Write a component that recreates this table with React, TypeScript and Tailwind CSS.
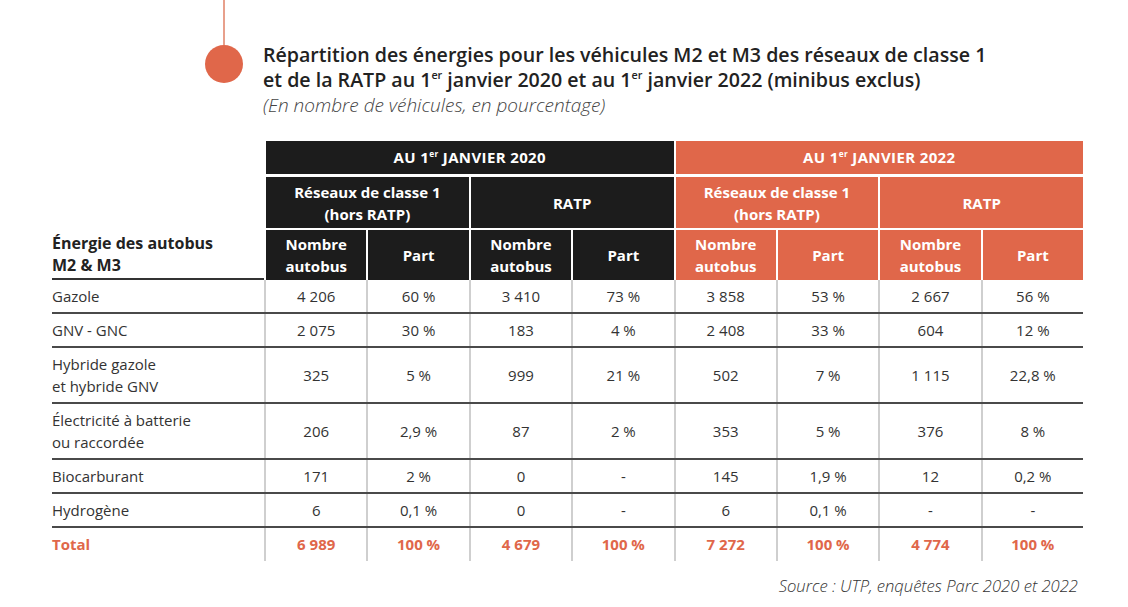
import React from "react"

const ORANGE = "bg-[#e0674a]"

type Row = { label: string[]; values: string[] }

const rows: Row[] = [
  { label: ["Gazole"], values: ["4 206", "60 %", "3 410", "73 %", "3 858", "53 %", "2 667", "56 %"] },
  { label: ["GNV - GNC"], values: ["2 075", "30 %", "183", "4 %", "2 408", "33 %", "604", "12 %"] },
  { label: ["Hybride gazole", "et hybride GNV"], values: ["325", "5 %", "999", "21 %", "502", "7 %", "1 115", "22,8 %"] },
  { label: ["Électricité à batterie", "ou raccordée"], values: ["206", "2,9 %", "87", "2 %", "353", "5 %", "376", "8 %"] },
  { label: ["Biocarburant"], values: ["171", "2 %", "0", "-", "145", "1,9 %", "12", "0,2 %"] },
  { label: ["Hydrogène"], values: ["6", "0,1 %", "0", "-", "6", "0,1 %", "-", "-"] },
]

const totals = ["6 989", "100 %", "4 679", "100 %", "7 272", "100 %", "4 774", "100 %"]

function Er() {
  return <sup className="text-[0.55em] -top-[0.75em] leading-none">er</sup>
}

export default function App() {
  const grid = "grid grid-cols-[212px_repeat(8,1fr)] gap-x-[2px]"

  return (
    <div
      className="w-[1128px] h-[607px] bg-white relative overflow-hidden text-[#2a2a2a]"
      style={{ fontFamily: '"Open Sans", "Liberation Sans", sans-serif' }}
    >
      {/* titre */}
      <div className="flex items-start pl-[205px]">
        <div className="flex flex-col items-center w-[38px]">
          <div className="w-[2px] h-[45px] bg-[#e8a08c]" />
          <div className={`w-[38px] h-[38px] rounded-full ${ORANGE}`} />
        </div>
        <div className="pl-[20px] pt-[42px]">
          <h1 className="text-[19.6px] leading-[25px] font-semibold text-[#222] whitespace-nowrap">
            Répartition des énergies pour les véhicules M2 et M3 des réseaux de classe 1
            <br />
            et de la RATP au 1<Er /> janvier 2020 et au 1<Er /> janvier 2022 (minibus exclus)
          </h1>
          <p className="text-[19px] leading-[26px] italic font-light text-[#444] whitespace-nowrap">
            (En nombre de véhicules, en pourcentage)
          </p>
        </div>
      </div>

      {/* tableau */}
      <div className="ml-[52px] mt-[23px] w-[1031px] text-[15px]">
        {/* en-têtes */}
        <div className={grid}>
          <div />
          <div className="col-span-4 h-[33px] bg-[#1c1c1c] text-white font-bold text-[15px] flex items-center justify-center tracking-wide">
            <span>
              AU 1<Er /> JANVIER 2020
            </span>
          </div>
          <div className={`col-span-4 h-[33px] ${ORANGE} text-white font-bold text-[15px] flex items-center justify-center tracking-wide`}>
            <span>
              AU 1<Er /> JANVIER 2022
            </span>
          </div>
        </div>
        <div className={`${grid} mt-[3px]`}>
          <div />
          {[
            ["Réseaux de classe 1", "(hors RATP)", "bg-[#1c1c1c]"],
            ["RATP", "", "bg-[#1c1c1c]"],
            ["Réseaux de classe 1", "(hors RATP)", ORANGE],
            ["RATP", "", ORANGE],
          ].map(([a, b, bg], i) => (
            <div
              key={i}
              className={`col-span-2 h-[51px] ${bg} text-white font-bold text-[15px] leading-[22px] flex flex-col items-center justify-center text-center`}
            >
              <span>{a}</span>
              {b && <span>{b}</span>}
            </div>
          ))}
        </div>
        <div className={`${grid} mt-[2px]`}>
          <div className="h-[50px] border-b-2 border-[#333] flex flex-col justify-center font-bold text-[16px] leading-[22px] text-[#222]">
            <span>Énergie des autobus</span>
            <span>M2 &amp; M3</span>
          </div>
          {Array.from({ length: 8 }).map((_, i) => (
            <div
              key={i}
              className={`h-[50px] ${i < 4 ? "bg-[#1c1c1c]" : ORANGE} text-white font-bold leading-[22px] flex flex-col items-center justify-center text-center`}
            >
              {i % 2 === 0 ? (
                <>
                  <span>Nombre</span>
                  <span>autobus</span>
                </>
              ) : (
                <span>Part</span>
              )}
            </div>
          ))}
        </div>

        {/* données */}
        {rows.map((r) => (
          <div key={r.label[0]} className={`${grid} bg-[#cfcfcf] border-b-2 border-[#4a4a4a]`}>
            <div
              className={`bg-white flex flex-col justify-center leading-[22px] text-[#333] ${
                r.label.length > 1 ? "h-[54px]" : "h-[32px]"
              }`}
            >
              {r.label.map((l) => (
                <span key={l}>{l}</span>
              ))}
            </div>
            {r.values.map((v, i) => (
              <div key={i} className="bg-white flex items-center justify-center text-[#333]">
                {v}
              </div>
            ))}
          </div>
        ))}
        <div className={`${grid} bg-[#cfcfcf]`}>
          <div className="bg-white h-[33px] flex items-center font-bold text-[#e0674a]">Total</div>
          {totals.map((v, i) => (
            <div key={i} className="bg-white flex items-center justify-center font-bold text-[#e0674a]">
              {v}
            </div>
          ))}
        </div>
      </div>

      <p className="absolute right-[50px] top-[574px] text-[16.6px] italic font-light text-[#333]">
        Source : UTP, enquêtes Parc 2020 et 2022
      </p>
    </div>
  )
}
